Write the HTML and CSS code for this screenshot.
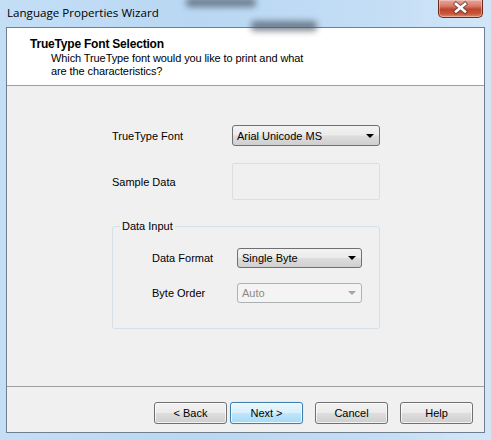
FILE: index.html
```html
<!DOCTYPE html>
<html>
<head>
<meta charset="utf-8">
<link rel="stylesheet" href="styles.css">
</head>
<body>
<div class="window">
  <div class="titlebar">
    <div class="blur blur-a"></div>
    <div class="blur blur-b"></div>
    <span class="title">Language Properties Wizard</span>
    <div class="close">
      <svg width="45" height="18" viewBox="0 0 45 18">
        <path d="M18 5 L27 12.5 M27 5 L18 12.5" stroke="#4a3030" stroke-width="4.6" stroke-linecap="square" fill="none" opacity="0.6"/>
        <path d="M18 5 L27 12.5 M27 5 L18 12.5" stroke="#ffffff" stroke-width="2.6" stroke-linecap="square" fill="none"/>
      </svg>
    </div>
  </div>
  <div class="client">
    <div class="header">
      <div class="h-title">TrueType Font Selection</div>
      <div class="h-sub">Which TrueType font would you like to print and what<br>are the characteristics?</div>
    </div>
    <div class="content">
      <div class="row row-font">
        <span class="label">TrueType Font</span>
        <div class="combo wide"><span>Arial Unicode MS</span><i class="arrow"></i></div>
      </div>
      <div class="row row-sample">
        <span class="label">Sample Data</span>
        <div class="sample"></div>
      </div>
      <fieldset class="group">
        <legend>Data Input</legend>
        <div class="grow grow-first">
          <span class="glabel">Data Format</span>
          <div class="combo narrow"><span>Single Byte</span><i class="arrow"></i></div>
        </div>
        <div class="grow">
          <span class="glabel">Byte Order</span>
          <div class="combo narrow disabled"><span>Auto</span><i class="arrow"></i></div>
        </div>
      </fieldset>
    </div>
    <div class="buttons">
      <button class="btn">&lt; Back</button>
      <button class="btn default">Next &gt;</button>
      <button class="btn gap">Cancel</button>
      <button class="btn gap">Help</button>
    </div>
  </div>
</div>
</body>
</html>
```
FILE: styles.css
```css
html, body {
  margin: 0;
  padding: 0;
  width: 491px;
  height: 440px;
  overflow: hidden;
}
body {
  font-family: "Liberation Sans", Arial, sans-serif;
  font-size: 11px;
  color: #000;
}
.window {
  width: 491px;
  height: 440px;
  box-sizing: border-box;
  padding: 0 6px 7px 6px;
  background: linear-gradient(90deg, #c4def6 0%, #b9d7f3 40%, #c3ddf5 75%, #d2e6f8 100%);
  display: flex;
  flex-direction: column;
  overflow: hidden;
}
.titlebar {
  position: relative;
  height: 27px;
  flex: none;
}
.blur {
  position: absolute;
  background: #4a5663;
  filter: blur(3px);
  opacity: 0.7;
  border-radius: 4px;
}
.blur-a { left: 180px; top: -2px; width: 70px; height: 9px; }
.blur-b { left: 245px; top: 21px; width: 66px; height: 10px; }
.title {
  position: relative;
  display: block;
  padding: 5px 0 0 1px;
  font-family: "Open Sans", "Noto Sans", sans-serif;
  font-size: 11.6px;
  line-height: 16px;
  color: #000;
}
.close {
  position: absolute;
  right: 2px;
  top: 0;
  width: 45px;
  height: 18px;
  box-sizing: border-box;
  border: 1px solid #6b2c22;
  border-top: none;
  border-radius: 0 0 5px 5px;
  background: linear-gradient(180deg, #e6a699 0%, #d77d6a 35%, #c0432c 55%, #c8553a 80%, #dd8a6e 100%);
  box-shadow: inset 0 0 0 1px rgba(255, 220, 210, 0.45);
}
.close svg { display: block; position: absolute; left: -1px; top: -1px; }
.client {
  flex: 1;
  border: 1px solid #6f7f8f;
  background: #f0f0f0;
  display: flex;
  flex-direction: column;
}
.header {
  background: #fff;
  height: 58px;
  box-sizing: border-box;
  border-bottom: 1px solid #a0a0a0;
  padding: 9px 0 0 23px;
  flex: none;
}
.h-title {
  font-weight: bold;
  font-size: 12px;
  line-height: 15px;
  letter-spacing: -0.2px;
}
.h-sub {
  padding-left: 21px;
  line-height: 13px;
  letter-spacing: -0.1px;
}
.content {
  flex: 1;
  padding: 39px 0 0 105px;
  border-bottom: 1px solid #a0a0a0;
}
.row {
  display: flex;
  align-items: center;
}
.label {
  width: 120px;
  flex: none;
}
.row-sample { margin-top: 17px; }
.row-sample .label { padding-top: 1px; }
.combo {
  height: 21px;
  box-sizing: border-box;
  border: 1px solid #707070;
  border-radius: 3px;
  background: linear-gradient(180deg, #f3f3f3 0%, #ebebeb 48%, #dddddd 52%, #cfcfcf 100%);
  display: flex;
  align-items: center;
  padding: 0 0 0 4px;
  position: relative;
}
.combo span { flex: 1; }
.combo.wide { width: 148px; }
.combo.narrow { width: 125px; height: 20px; }
.arrow {
  width: 0;
  height: 0;
  border-left: 4px solid transparent;
  border-right: 4px solid transparent;
  border-top: 4px solid #000;
  margin-right: 5px;
}
.combo.disabled {
  border-color: #adb2b5;
  background: #f4f4f4;
  color: #8b8b8b;
}
.combo.disabled .arrow { border-top-color: #a6a6a6; }
.sample {
  width: 148px;
  height: 37px;
  box-sizing: border-box;
  border: 1px solid #dadee2;
  border-radius: 2px;
  background: #f0f0f0;
}
.group {
  margin: 20px 0 0 0;
  width: 268px;
  box-sizing: border-box;
  height: 109px;
  border: 1px solid #d5dfe5;
  border-radius: 3px;
  padding: 0 0 0 39px;
}
.group legend {
  padding: 0 2px;
  margin-left: -32px;
  line-height: 13px;
}
.grow {
  display: flex;
  align-items: center;
  margin-top: 15px;
}
.glabel { width: 85px; flex: none; }
.buttons {
  height: 45px;
  flex: none;
  display: flex;
  align-items: flex-start;
  justify-content: flex-end;
  padding: 15px 11px 0 0;
  box-sizing: border-box;
}
.btn {
  width: 73px;
  height: 22px;
  margin: 0 0 0 3px;
  font-family: "Liberation Sans", Arial, sans-serif;
  font-size: 11px;
  color: #000;
  border: 1px solid #707070;
  border-radius: 3px;
  background: linear-gradient(180deg, #f2f2f2 0%, #ebebeb 48%, #dddddd 52%, #cfcfcf 100%);
  box-shadow: inset 0 0 0 1px rgba(255,255,255,0.7);
  padding: 0;
}
.btn.gap { margin-left: 12px; }
.btn.default {
  border-color: #3c7fb1;
  background: linear-gradient(180deg, #eaf6fd 0%, #d9f0fc 48%, #bee6fd 52%, #a7d9f5 100%);
  box-shadow: inset 0 0 0 1px rgba(255,255,255,0.8), 0 0 1px 0 #6fc2f0;
}
```
